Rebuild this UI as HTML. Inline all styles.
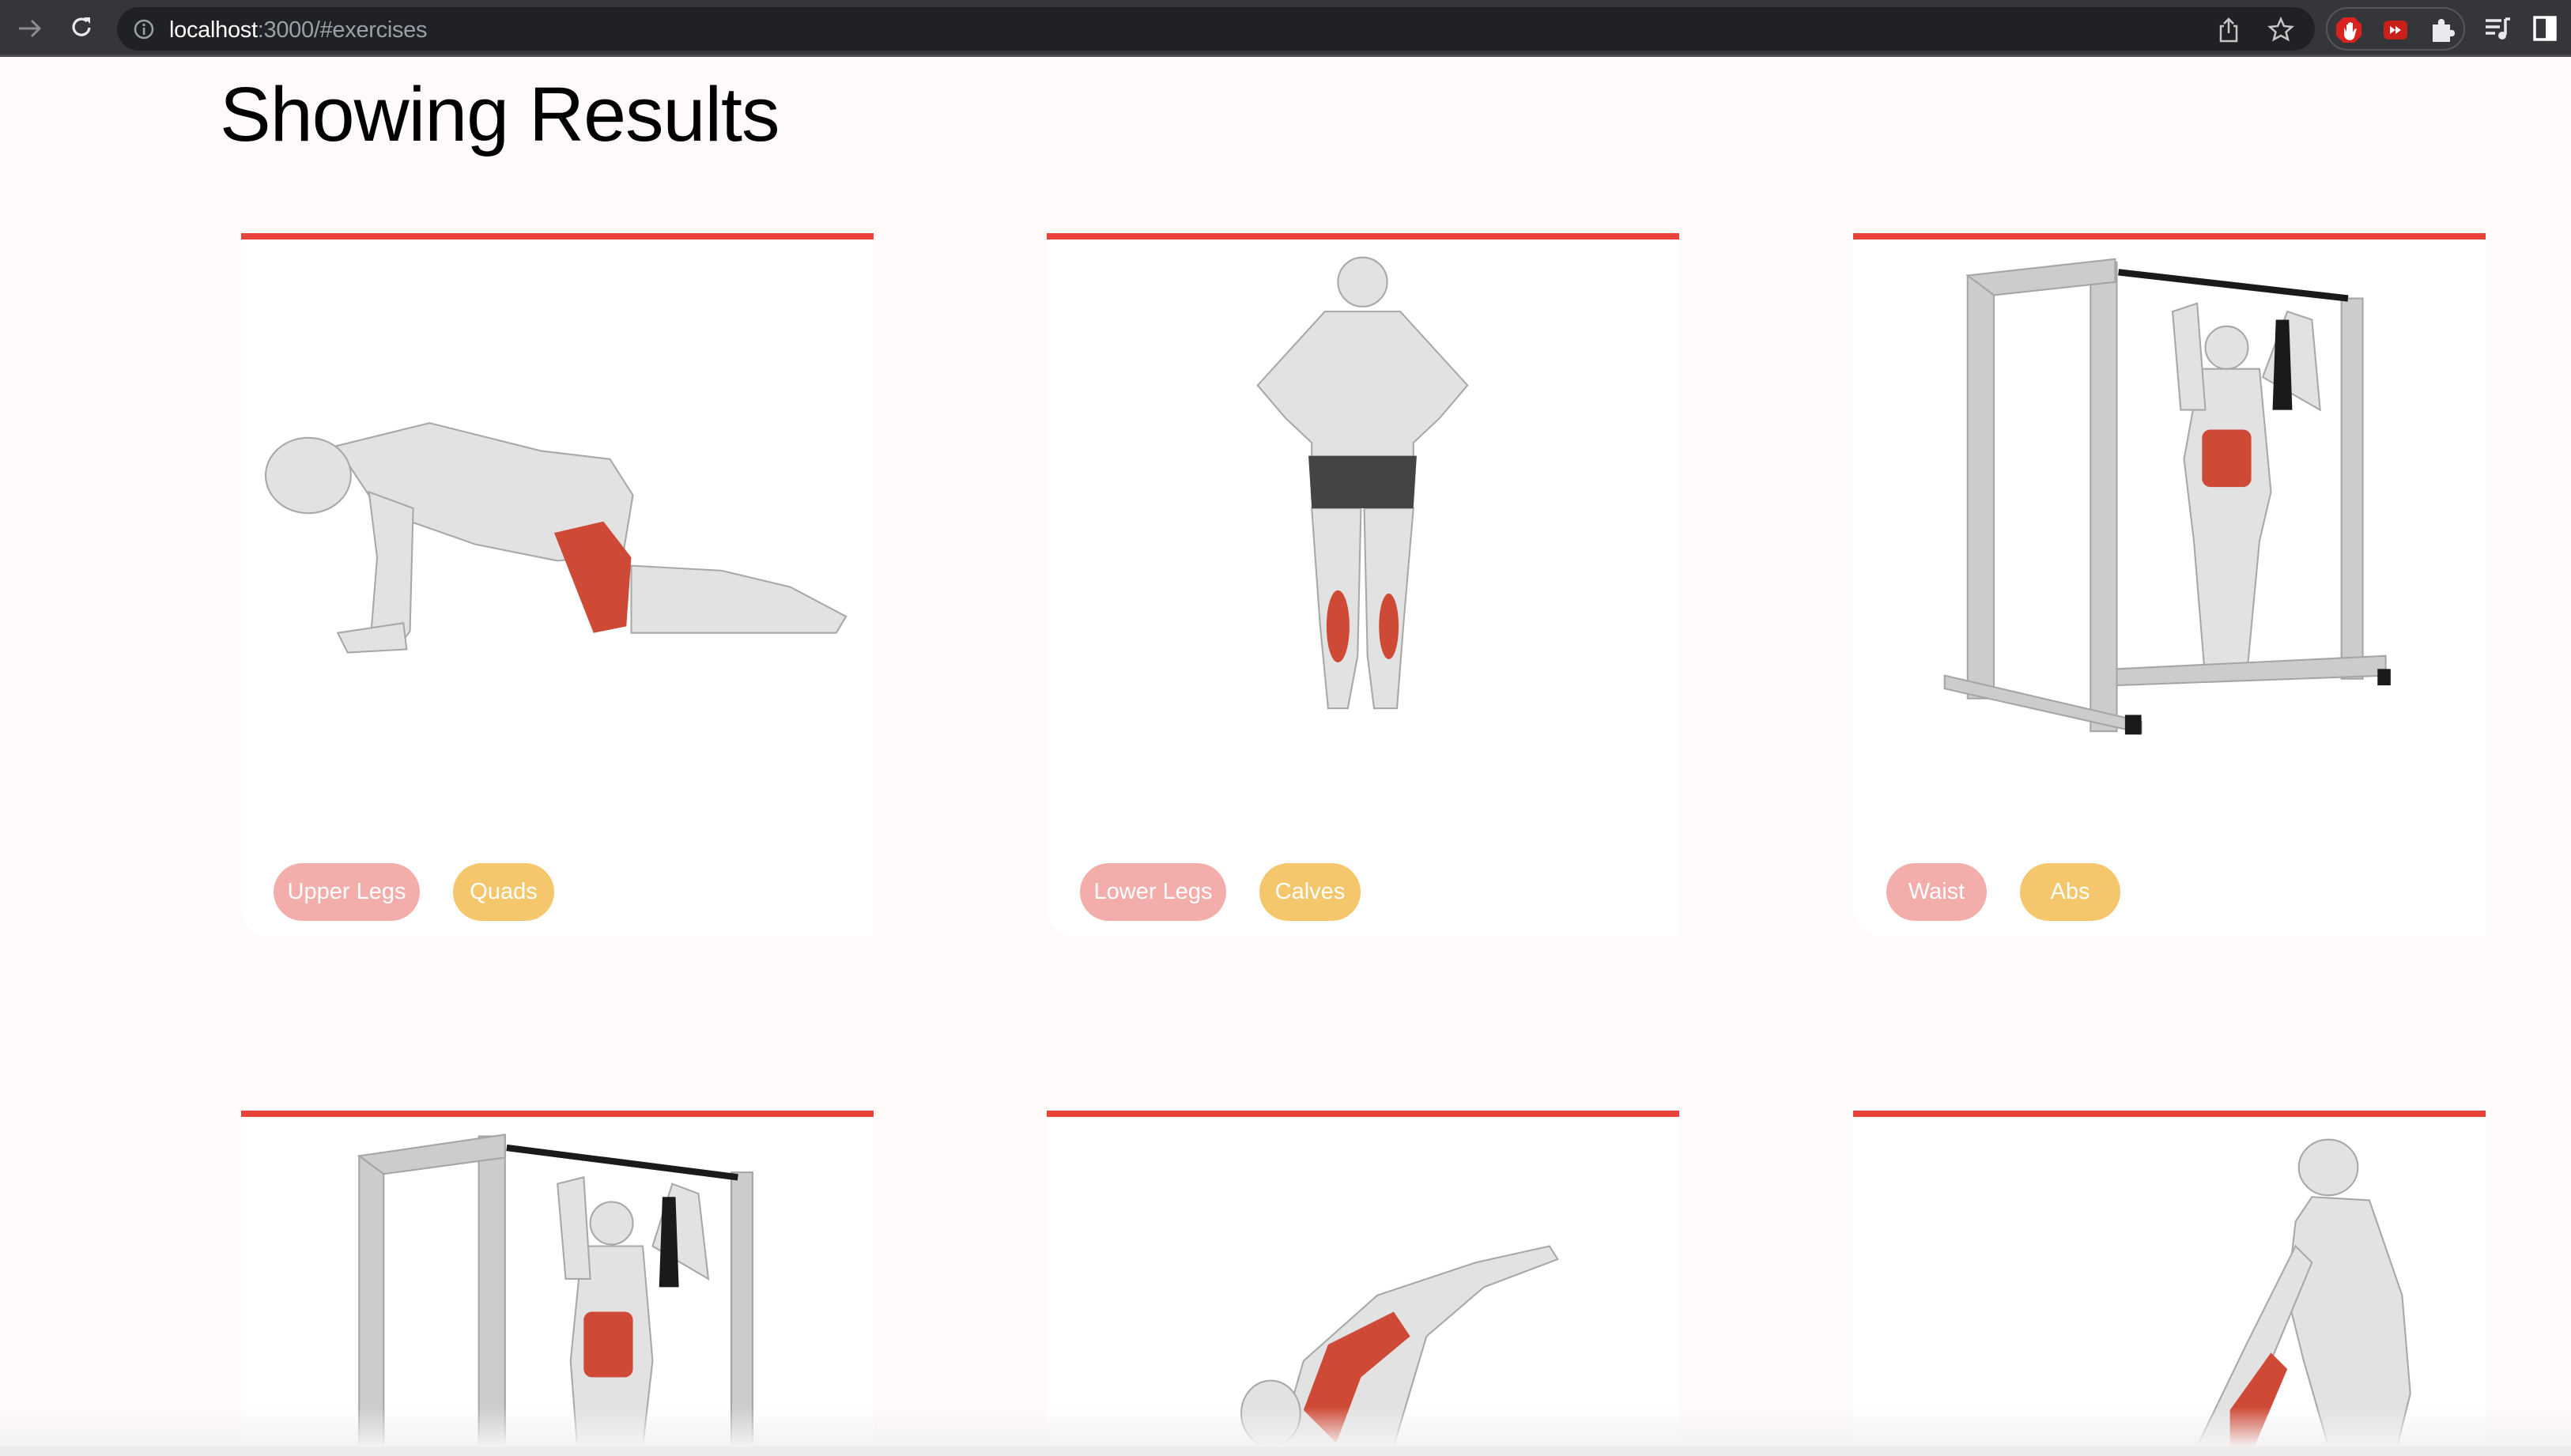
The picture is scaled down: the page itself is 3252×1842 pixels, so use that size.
<!DOCTYPE html>
<html><head><meta charset="utf-8"><style>
*{margin:0;padding:0;box-sizing:border-box}
html,body{width:3252px;height:1842px;max-height:1842px;overflow:hidden;background:#fffafa;font-family:"Liberation Sans",Arial,sans-serif}
body{position:relative}
.bar{position:absolute;left:0;top:0;width:3252px;height:72px;background:#35363a;border-bottom:3px solid #4a4b4f}
.url{position:absolute;left:148px;top:9px;width:2780px;height:55px;background:#202124;border-radius:28px}
.url span{position:absolute;left:66px;top:13px;font-size:29px;color:#fff;letter-spacing:-0.3px}
.url span i{font-style:normal;color:#9aa0a6}
.ext{position:absolute;left:2942px;top:9px;width:176px;height:55px;border:2px solid #55565a;border-radius:28px}
h1{position:absolute;left:278px;top:89px;font-size:97px;font-weight:400;color:#000;letter-spacing:-1px}
.card{position:absolute;width:800px;background:#fff;border-top:8px solid #e9423a;border-bottom-left-radius:36px}
.badge{position:absolute;top:1092px;height:73px;border-radius:37px;color:#fff;font-size:29px;line-height:73px;text-align:center}
.p{background:#f3aeab}.y{background:#f4c76c}
svg.ov{position:absolute;left:0;top:0}
.fade{position:absolute;left:0;top:1780px;width:3252px;height:50px;background:linear-gradient(rgba(244,242,242,0),rgba(244,242,242,1))}
.band{position:absolute;left:0;top:1830px;width:3252px;height:12px;background:#eeebeb}
</style></head><body>
<div class="bar">
 <svg style="position:absolute;left:20px;top:20px" width="36" height="32" viewBox="0 0 36 32"><path d="M4 16H30M20 6L30 16L20 26" stroke="#8a8c90" stroke-width="3" fill="none"/></svg>
 <svg style="position:absolute;left:86px;top:18px" width="34" height="34" viewBox="0 0 34 34"><path d="M27 17A10 10 0 1 1 24 9" stroke="#e8eaed" stroke-width="3.2" fill="none"/><path d="M20 4H28V12Z" fill="#e8eaed"/></svg>
 <div class="url">
  <svg style="position:absolute;left:20px;top:14px" width="28" height="28" viewBox="0 0 28 28"><circle cx="14" cy="14" r="11" stroke="#9aa0a6" stroke-width="2.5" fill="none"/><rect x="12.8" y="12" width="2.6" height="9" fill="#9aa0a6"/><circle cx="14" cy="8.5" r="1.7" fill="#9aa0a6"/></svg>
  <span>localhost<i>:3000/#exercises</i></span>
  <svg style="position:absolute;left:2656px;top:12px" width="30" height="34" viewBox="0 0 30 34"><path d="M9 12H5V31H25V12H21M15 3V21M9 9L15 3L21 9" stroke="#c4c7c5" stroke-width="2.5" fill="none"/></svg>
  <svg style="position:absolute;left:2720px;top:12px" width="34" height="32" viewBox="0 0 34 32"><path d="M17 3L21 12L31 13L23.5 19.5L26 29L17 24L8 29L10.5 19.5L3 13L13 12Z" stroke="#c4c7c5" stroke-width="2.5" fill="none"/></svg>
 </div>
 <div class="ext">
  <svg style="position:absolute;left:10px;top:10px" width="34" height="34" viewBox="0 0 34 34"><polygon points="10,1 24,1 33,10 33,24 24,33 10,33 1,24 1,10" fill="#d9231e"/><path d="M11 14V24Q13 30 19 30Q24 29 25 22L27 15L24 16L22 20V8H20V17V7H18V17V8H16V18V10H14V19Z" fill="#fff"/></svg>
  <svg style="position:absolute;left:70px;top:13px" width="32" height="28" viewBox="0 0 32 28"><rect x="1" y="2" width="30" height="24" rx="6" fill="#c8201b"/><path d="M9 9L16 14L9 19ZM16 9L23 14L16 19Z" fill="#fff"/></svg>
  <svg style="position:absolute;left:130px;top:10px" width="32" height="34" viewBox="0 0 32 34"><path d="M3 10H10Q9 3 14 3Q19 3 18 10H25V17Q31 16 31 21Q31 26 25 25V32H3Z" fill="#e8eaed"/></svg>
 </div>
 <svg style="position:absolute;left:3142px;top:20px" width="36" height="32" viewBox="0 0 36 32"><path d="M2 6H22M2 14H20M2 22H14" stroke="#e8eaed" stroke-width="3.5"/><path d="M27 4H33M27 4V24" stroke="#e8eaed" stroke-width="3.5"/><circle cx="23" cy="25" r="5" fill="#e8eaed"/></svg>
 <svg style="position:absolute;left:3204px;top:20px" width="30" height="32" viewBox="0 0 30 32"><rect x="2" y="2" width="26" height="28" fill="none" stroke="#fff" stroke-width="3.5"/><rect x="16" y="2" width="12" height="28" fill="#fff"/></svg>
</div>

<h1>Showing Results</h1>

<div class="card" style="left:305px;top:295px;height:890px"></div>
<div class="card" style="left:1324px;top:295px;height:890px"></div>
<div class="card" style="left:2344px;top:295px;height:890px"></div>
<div class="card" style="left:305px;top:1405px;height:437px"></div>
<div class="card" style="left:1324px;top:1405px;height:437px"></div>
<div class="card" style="left:2344px;top:1405px;height:437px"></div>

<div class="badge p" style="left:346px;width:185px">Upper Legs</div>
<div class="badge y" style="left:573px;width:128px">Quads</div>
<div class="badge p" style="left:1366px;width:185px">Lower Legs</div>
<div class="badge y" style="left:1593px;width:128px">Calves</div>
<div class="badge p" style="left:2386px;width:127px">Waist</div>
<div class="badge y" style="left:2555px;width:127px">Abs</div>

<svg class="ov" width="3252" height="1842" viewBox="0 0 1568 888" preserveAspectRatio="none">
<g fill="#e2e2e2" stroke="#a8a8a8" stroke-width="1">
 <polygon points="205,272 262,258 330,275 372,280 386,302 380,338 340,342 290,332 250,318 225,302"/>
 <ellipse cx="188" cy="290" rx="26" ry="23"/>
 <polygon points="225,300 252,310 250,385 242,396 226,390 230,340"/>
 <polygon points="206,386 246,380 248,396 212,398"/>
 <polygon points="385,345 440,348 482,358 516,376 510,386 440,386 385,386"/>
 <circle cx="831" cy="172" r="15"/>
 <polygon points="808,190 854,190 895,235 878,255 862,270 862,280 800,280 800,270 784,255 767,235"/>
 <polygon points="800,310 830,310 828,400 822,432 810,432 805,380"/>
 <polygon points="832,310 862,310 856,380 852,432 838,432 834,400"/>
 <polygon points="1342,225 1378,225 1385,300 1378,330 1370,415 1345,415 1338,330 1332,280"/>
 <circle cx="1358" cy="212" r="13"/>
 <polygon points="1325,190 1340,185 1345,250 1330,250"/>
 <polygon points="1395,190 1410,195 1415,250 1380,230"/>
 <polygon points="355,760 392,760 398,830 392,882 352,882 348,830"/>
 <circle cx="373" cy="746" r="13"/>
 <polygon points="340,722 356,718 360,780 345,780"/>
 <polygon points="410,722 426,728 432,780 398,760"/>
 <polygon points="780,882 795,830 840,790 900,770 945,760 950,768 905,785 870,815 850,882"/>
 <ellipse cx="775" cy="862" rx="18" ry="20"/>
 <ellipse cx="1420" cy="712" rx="18" ry="17"/>
 <polygon points="1410,730 1445,732 1465,790 1470,850 1462,882 1420,882 1405,830 1395,790 1400,745"/>
 <polygon points="1400,760 1410,770 1385,830 1365,882 1340,882 1370,820"/>
</g>
<g fill="#cccccc" stroke="#a5a5a5" stroke-width="1">
 <rect x="1200" y="168" width="16" height="258"/><rect x="1275" y="160" width="16" height="286"/><rect x="1428" y="182" width="13" height="232"/>
 <polygon points="1200,168 1290,158 1290,172 1216,180"/>
 <polygon points="1186,412 1306,440 1306,447 1186,420"/>
 <polygon points="1291,408 1455,400 1455,412 1291,418"/>
 <rect x="219" y="705" width="15" height="177"/><rect x="292" y="693" width="16" height="189"/><rect x="446" y="715" width="13" height="167"/>
 <polygon points="219,705 308,692 308,706 234,716"/>
</g>
<g stroke="#1a1a1a" stroke-width="4"><line x1="1292" y1="166" x2="1432" y2="182"/><line x1="309" y1="700" x2="450" y2="718"/></g>
<g fill="#1a1a1a"><polygon points="1388,195 1396,195 1398,250 1386,250"/><polygon points="404,730 412,730 414,785 402,785"/><rect x="1296" y="436" width="10" height="12"/><rect x="1450" y="408" width="8" height="10"/></g>
<g fill="#cf4a36">
 <polygon points="338,325 368,318 385,340 382,382 362,386"/>
 <ellipse cx="816" cy="382" rx="7" ry="22"/><ellipse cx="847" cy="382" rx="6" ry="20"/>
 <rect x="1343" y="262" width="30" height="35" rx="5"/>
 <rect x="356" y="800" width="30" height="40" rx="5"/>
 <polygon points="795,860 810,820 850,800 860,815 830,840 815,880"/>
 <polygon points="1360,860 1385,825 1395,835 1375,882 1360,882"/>
</g>
<g fill="#444"><polygon points="798,278 864,278 862,310 800,310"/></g>
</svg>
<div class="fade"></div>
<div class="band"></div>
</body></html>
